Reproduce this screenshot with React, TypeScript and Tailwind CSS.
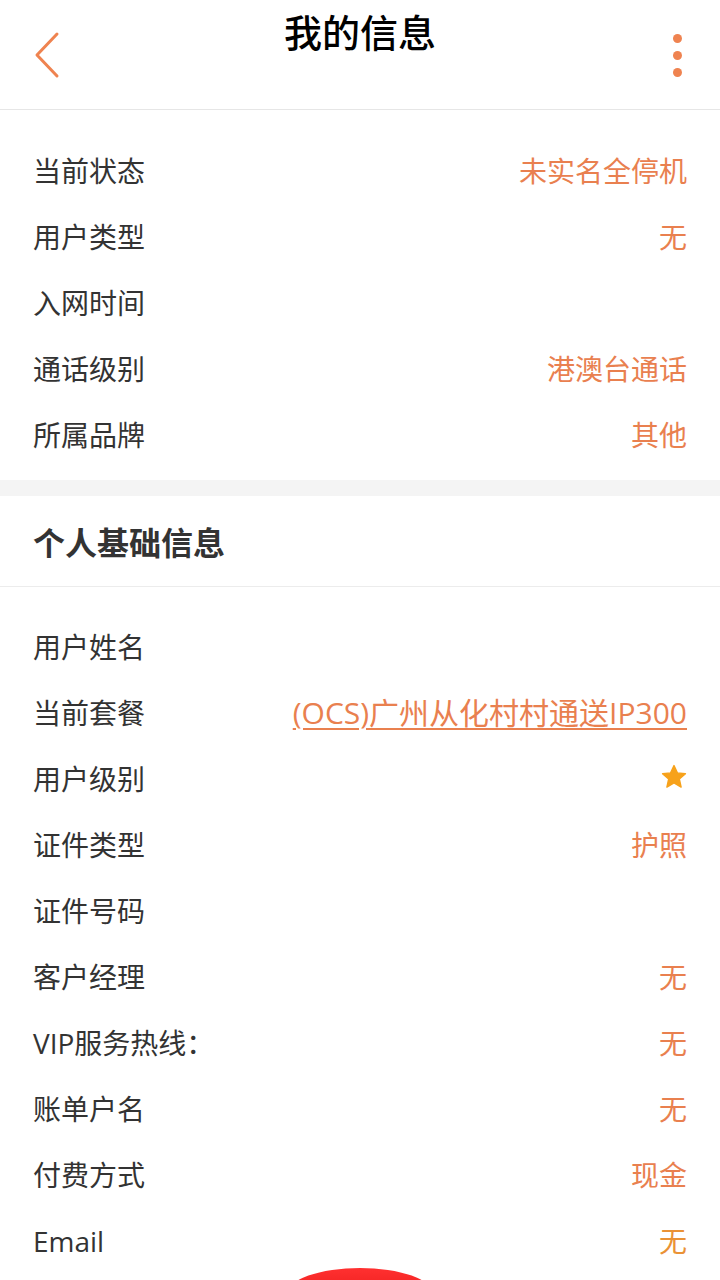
import React from 'react';

type Row = { label: string; value?: string; kind?: 'link' | 'star' | 'amber' };

const statusRows: Row[] = [
  { label: '当前状态', value: '未实名全停机' },
  { label: '用户类型', value: '无' },
  { label: '入网时间' },
  { label: '通话级别', value: '港澳台通话' },
  { label: '所属品牌', value: '其他' },
];

const baseRows: Row[] = [
  { label: '用户姓名' },
  { label: '当前套餐', value: '(OCS)广州从化村村通送IP300', kind: 'link' },
  { label: '用户级别', kind: 'star' },
  { label: '证件类型', value: '护照' },
  { label: '证件号码' },
  { label: '客户经理', value: '无' },
  { label: 'VIP服务热线：', value: '无' },
  { label: '账单户名', value: '无' },
  { label: '付费方式', value: '现金' },
  { label: 'Email', value: '无', kind: 'amber' },
];

const InfoRow: React.FC<{ row: Row }> = ({ row }) => (
  <div className="flex h-[66px] items-center justify-between px-[33px]">
    <span className="text-[28px] leading-[40px] text-[#333333]">{row.label}</span>
    {row.kind === 'star' ? (
      <svg width="28" height="28" viewBox="0 0 24 24" className="mr-[-1px] mt-[-4px]">
        <path
          d="M12 2.2l2.9 6.3 6.9.7-5.2 4.6 1.5 6.8L12 17.1l-6.1 3.5 1.5-6.8-5.2-4.6 6.9-.7z"
          fill="#f7a21b"
          stroke="#f7a21b"
          strokeWidth="1.2"
          strokeLinejoin="round"
        />
      </svg>
    ) : row.value ? (
      <span
        className={`leading-[40px] ${
          row.kind === 'link'
            ? 'text-[30px] text-[#e9804f] underline decoration-[1.5px] underline-offset-[4px]'
            : row.kind === 'amber'
              ? 'text-[28px] text-[#ea9236]'
              : 'text-[28px] text-[#e9804f]'
        }`}
      >
        {row.value}
      </span>
    ) : null}
  </div>
);

const App: React.FC = () => {
  return (
    <div
      className="relative min-h-[1280px] w-[720px] overflow-hidden bg-white"
      style={{ fontFamily: "'Open Sans', 'Noto Sans CJK SC', sans-serif" }}
    >
      {/* Header */}
      <div className="relative flex h-[110px] items-start justify-between border-b border-[#e6e6e6] px-[33px]">
        <svg width="28" height="48" viewBox="0 0 28 48" className="mt-[31px]">
          <path d="M24 3L4 24l20 21" fill="none" stroke="#ef8350" strokeWidth="3" strokeLinecap="round" strokeLinejoin="round" />
        </svg>
        <h1 className="absolute left-0 right-0 top-[6px] text-center text-[38px] font-medium leading-[52px] text-black">
          我的信息
        </h1>
        <div className="mr-[5px] mt-[34px] flex flex-col gap-[8px]">
          <span className="h-[9px] w-[9px] rounded-full bg-[#ef8350]" />
          <span className="h-[9px] w-[9px] rounded-full bg-[#ef8350]" />
          <span className="h-[9px] w-[9px] rounded-full bg-[#ef8350]" />
        </div>
      </div>

      {/* Status */}
      <div className="pb-[12px] pt-[28px]">
        {statusRows.map((r) => (
          <InfoRow key={r.label} row={r} />
        ))}
      </div>

      <div className="h-[16px] bg-[#f4f4f4]" />

      {/* Basic info */}
      <div className="flex h-[91px] items-center border-b border-[#ececec] px-[33px] pt-[3px]">
        <span className="text-[32px] font-bold text-[#333333]">个人基础信息</span>
      </div>
      <div className="pt-[27px]">
        {baseRows.map((r) => (
          <InfoRow key={r.label} row={r} />
        ))}
      </div>

      {/* Floating button */}
      <div className="fixed bottom-[-40px] left-[287px] h-[52px] w-[146px] rounded-[50%] bg-gradient-to-b from-[#ff3030] to-[#e00000]" />
    </div>
  );
};

export default App;
